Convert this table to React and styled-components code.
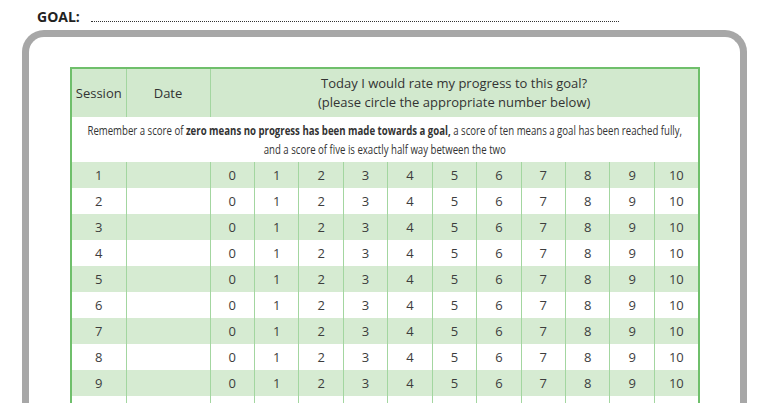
import React from "react";
import styled, { createGlobalStyle } from "styled-components";

const Global = createGlobalStyle`
  html, body { margin: 0; padding: 0; background: #fff; }
  body { font-family: "Open Sans", "Noto Sans", sans-serif; color: #3a3a3a; overflow: hidden; }
`;

const Page = styled.div`
  width: 767px;
  height: 403px;
  overflow: hidden;
`;

const GoalRow = styled.div`
  display: flex;
  align-items: flex-end;
  gap: 11px;
  padding: 9px 0 0 37px;
  height: 25px;
  box-sizing: border-box;
`;

const GoalLabel = styled.span`
  font-family: "Open Sans", sans-serif;
  font-weight: 700;
  font-size: 14px;
  color: #222;
  line-height: 16px;
`;

const Dots = styled.span`
  width: 528px;
  height: 0;
  border-bottom: 1.5px dotted #333;
  margin-bottom: 3px;
`;

const Frame = styled.div`
  margin: 5px 0 0 22px;
  width: 725px;
  height: 420px;
  border: 7px solid #a7a7a7;
  border-bottom: none;
  border-radius: 22px 22px 0 0;
  padding: 30px 0 0 41px;
  box-sizing: border-box;
`;

const Table = styled.table`
  border-collapse: collapse;
  table-layout: fixed;
  width: 628px;
  border: 2px solid #6fbf6b;
`;

const Cell = styled.td`
  border-left: 1px solid #a3d6a0;
  text-align: center;
  vertical-align: middle;
  font-size: 13px;
  height: ${p => p.$h || 26}px;
  padding: 0;
  color: #3d3d3d;
  &:first-child { border-left: none; }
`;

const HeadCell = styled(Cell)`
  background: #d2e9ce;
  font-size: 13px;
  line-height: 19px;
  color: #333;
`;

const Note = styled.td`
  height: 45px;
  text-align: center;
  padding: 0;
`;

const NoteText = styled.span`
  display: inline-block;
  font-family: "Open Sans", sans-serif;
  font-size: 13px;
  line-height: 19px;
  white-space: nowrap;
  color: #333;
  transform: scaleX(0.74);
  margin: 0 -120px;
  b { font-weight: 700; }
`;

const Row = styled.tr`
  background: ${p => (p.$shade ? "#d6ebd2" : "#fff")};
`;

const scores = [0, 1, 2, 3, 4, 5, 6, 7, 8, 9, 10];
const sessions = [1, 2, 3, 4, 5, 6, 7, 8, 9, 10];

export default function App() {
  return (
    <Page>
      <Global />
      <GoalRow>
        <GoalLabel>GOAL:</GoalLabel>
        <Dots />
      </GoalRow>
      <Frame>
        <Table>
          <colgroup>
            <col style={{ width: 55 }} />
            <col style={{ width: 84 }} />
            {scores.map(s => (
              <col key={s} style={{ width: 44.45 }} />
            ))}
          </colgroup>
          <tbody>
            <tr>
              <HeadCell $h={48}>Session</HeadCell>
              <HeadCell $h={48}>Date</HeadCell>
              <HeadCell $h={48} colSpan={11}>
                Today I would rate my progress to this goal?
                <br />
                (please circle the appropriate number below)
              </HeadCell>
            </tr>
            <tr>
              <Note colSpan={13}>
                <NoteText>
                  Remember a score of <b>zero means no progress has been made towards a goal,</b> a score of ten means a goal has been reached fully,
                  <br />
                  and a score of five is exactly half way between the two
                </NoteText>
              </Note>
            </tr>
            {sessions.map((n, i) => (
              <Row key={n} $shade={i % 2 === 0}>
                <Cell>{n}</Cell>
                <Cell />
                {scores.map(s => (
                  <Cell key={s}>{s}</Cell>
                ))}
              </Row>
            ))}
          </tbody>
        </Table>
      </Frame>
    </Page>
  );
}
